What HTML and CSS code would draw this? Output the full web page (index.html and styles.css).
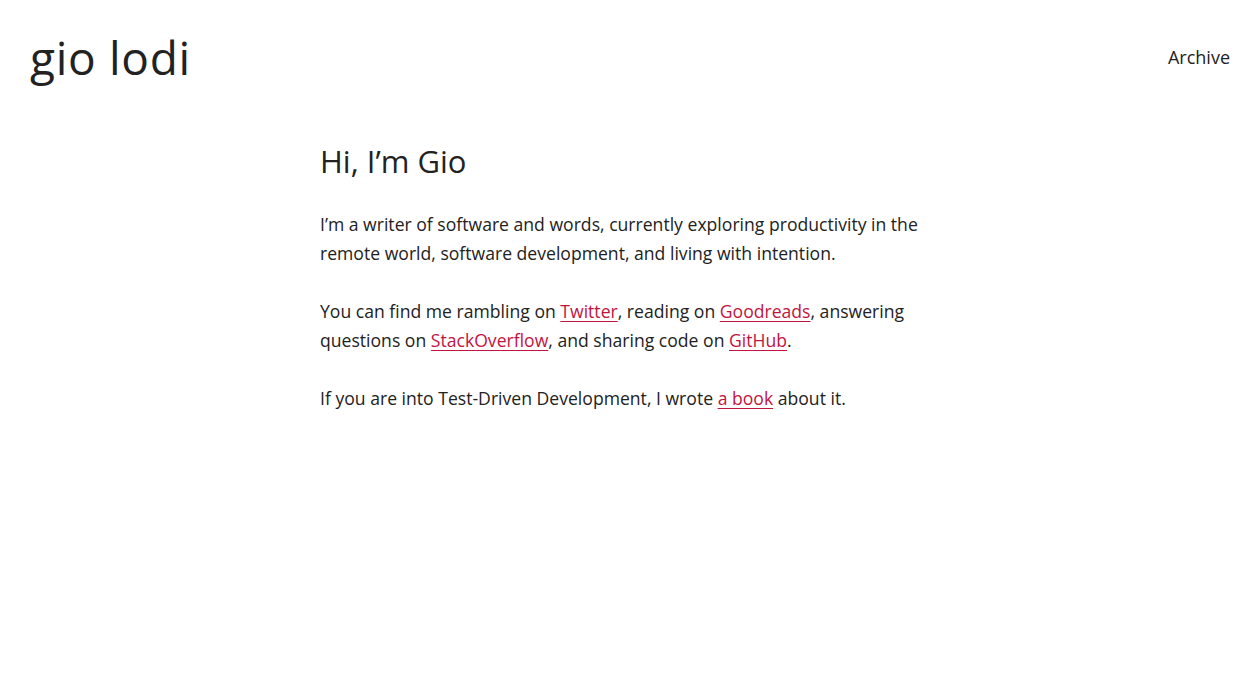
FILE: index.html
```html
<!DOCTYPE html>
<html lang="en">
<head>
<meta charset="utf-8">
<title>gio lodi</title>
<link rel="stylesheet" href="styles.css">
</head>
<body>
<header class="site-header">
  <a class="site-title" href="#">gio lodi</a>
  <nav class="site-nav"><a href="#">Archive</a></nav>
</header>
<main class="content">
  <h1 class="intro-title">Hi, I’m Gio</h1>
  <p>I’m a writer of software and words, currently exploring productivity in the remote world, software development, and living with intention.</p>
  <p>You can find me rambling on <a class="link" href="#">Twitter</a>, reading on <a class="link" href="#">Goodreads</a>, answering questions on <a class="link" href="#">StackOverflow</a>, and sharing code on <a class="link" href="#">GitHub</a>.</p>
  <p>If you are into Test-Driven Development, I wrote <a class="link" href="#">a book</a> about it.</p>
</main>
</body>
</html>
```

FILE: styles.css
```css
html, body {
  margin: 0;
  padding: 0;
  background: #fff;
}
body {
  font-family: "Open Sans", "Noto Sans", sans-serif;
  color: #222;
  font-size: 17.6px;
  line-height: 29px;
}
.site-header {
  display: flex;
  justify-content: space-between;
  align-items: center;
  padding: 27px 30px 0 30px;
  height: 60px;
}
.site-title {
  font-size: 46px;
  color: #222;
  text-decoration: none;
  letter-spacing: 0.7px;
}
.site-nav a {
  color: #222;
  text-decoration: none;
  font-size: 18px;
}
.content {
  width: 620px;
  margin: 54px auto 0 auto;
}
.intro-title {
  font-size: 31px;
  font-weight: 400;
  margin: 0 0 29px 0;
  line-height: 40px;
}
.content p {
  margin: 0 0 29px 0;
}
.link {
  color: #c2143f;
  text-decoration: underline;
  text-underline-offset: 3px;
}
```
